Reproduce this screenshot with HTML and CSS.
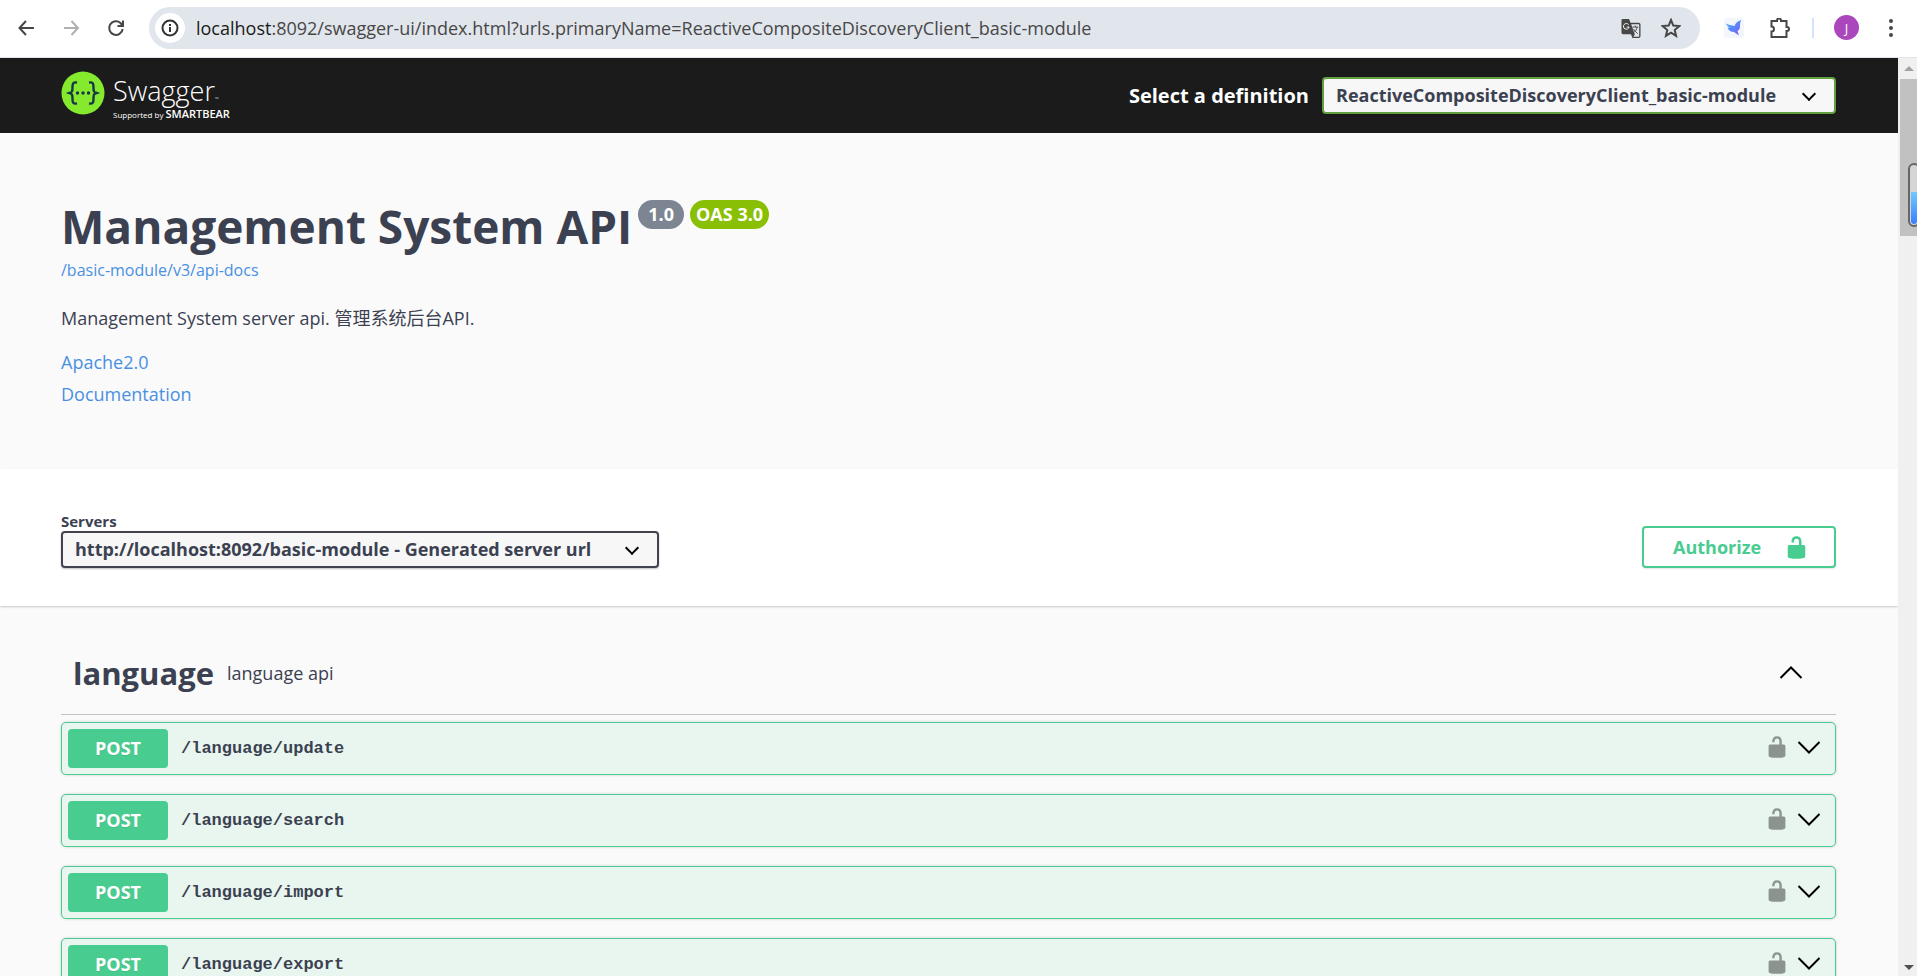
FILE: index.html
```html
<!DOCTYPE html>
<html lang="en">
<head>
<meta charset="utf-8">
<title>Swagger UI</title>
<link rel="stylesheet" href="styles.css">
</head>
<body>
<svg class="defs" aria-hidden="true">
  <symbol id="unlocked" viewBox="0 0 20 20"><path d="M15.8 8H14V5.6C14 2.703 12.665 1 10 1 7.334 1 6 2.703 6 5.6V6h2v-.801C8 3.754 8.797 3 10 3c1.203 0 2 .754 2 2.199V8H4c-.553 0-1 .646-1 1.199V17c0 .549.428 1.139.951 1.307l1.197.387C5.672 18.861 6.55 19 7.1 19h5.8c.549 0 1.428-.139 1.951-.307l1.196-.387c.524-.167.953-.757.953-1.306V9.199C17 8.646 16.352 8 15.8 8z" fill="currentColor"/></symbol>
  <symbol id="down" viewBox="0 0 24 24"><path d="M1.500 7l10.500 10.500L22.500 7" fill="none" stroke="currentColor" stroke-width="2"/></symbol>
</svg>
<header class="browser">
  <button class="tool" aria-label="Back"><svg viewBox="0 0 20 20"><path d="M18 10H4M10 3L3.500 10l6.500 7"/></svg></button>
  <button class="tool dim" aria-label="Forward"><svg viewBox="0 0 20 20"><path d="M3 10h13.500M10.500 3l6.500 7-6.500 7"/></svg></button>
  <button class="tool reload" aria-label="Reload"><svg viewBox="0 0 20 20"><path d="M16.700 11A6.800 6.800 0 1 1 14.500 5L17 8M17 2.500v5.500h-5.500"/></svg></button>
  <div class="omnibox">
    <button class="site" aria-label="Site information"><svg viewBox="0 0 20 20"><circle cx="10" cy="10" r="7.500"/><path d="M10 9v5M10 6v2"/></svg></button>
    <div class="url"><span class="host">localhost</span>:8092/swagger-ui/index.html?urls.primaryName=ReactiveCompositeDiscoveryClient_basic-module</div>
    <button class="tool" aria-label="Translate"><svg viewBox="1 0 20 21"><path class="solid" d="M2.500 1H9l1.500 4H19q2 0 2 2v12q0 2-2 2h-6.500L11 17H2.500Q1 17 1 15.500V2.500Q1 1 2.500 1z"/><path class="paper" d="M11.200 6.500H19q.600 0 .600.600v12q0 .600-.600.600h-5.500l1.500-2.500z"/><path class="thin" d="M12.500 9.500h6M15.500 8v1.500M17.500 9.500c-.500 3-2 4.500-4 6M13.500 11.500c1 2 3 3 4.500 5"/><path class="glyph" d="M8.500 7A3 3 0 1 0 9 9.500H6.500"/></svg></button>
    <button class="tool" aria-label="Bookmark"><svg viewBox="0 0 20 20"><path d="M10 2l2.300 5.600 6 .500-4.600 3.900 1.400 5.900L10 14.700l-5.100 3.200 1.400-5.900-4.600-3.900 6-.500z"/></svg></button>
  </div>
  <button class="tool bird" aria-label="Bird extension"><svg viewBox="0 0 20 20"><defs><linearGradient id="wing" x1="0" y1="0" x2="1" y2="1"><stop offset="0" stop-color="#3fb0ff"/><stop offset="1" stop-color="#7a5cf0"/></linearGradient></defs><path fill="url(#wing)" d="M2 5.500c3 1.500 6 2 8.500 2.500 1-3 3-5 7-6-1.500 2-1.500 4-1.500 6.500 0 2-1 3.500-2.500 4.500l1.500 4.500-5-3.500c-3 0-5.500-1.500-6.500-4.500l3 .300C4.500 9 3 8 2 5.500z"/></svg></button>
  <button class="tool extensions" aria-label="Extensions"><svg viewBox="2 1 19 20"><path d="M3 4h5.500v-.500a2 2 0 0 1 4 0V4H18v6h.500a2 2 0 0 1 0 4H18v6H3v-5.500a2.500 2.500 0 0 0 0-5z"/></svg></button>
  <span class="divider"></span>
  <button class="avatar" aria-label="Profile">J</button>
  <button class="tool menu" aria-label="Menu"><svg viewBox="0 0 20 20"><circle cx="10" cy="3" r="2"/><circle cx="10" cy="10" r="2"/><circle cx="10" cy="17" r="2"/></svg></button>
</header>
<div class="viewport">
  <main class="page">
    <div class="topbar">
      <div class="wrap topbar-row">
        <a class="logo" href="#">
          <svg class="mark" viewBox="0 0 44 44"><circle cx="22" cy="22" r="21.500" fill="#85ea2d"/><g fill="none" stroke="#173647" stroke-width="2.400"><path d="M16 11.500c-4-.500-4.500 1-4.500 4.500 0 4 0 5-3 6 3 1 3 2 3 6 0 3.500.500 5 4.500 4.500M28 11.500c4-.500 4.500 1 4.500 4.500 0 4 0 5 3 6-3 1-3 2-3 6 0 3.500-.500 5-4.500 4.500"/></g><g fill="#173647"><circle cx="16.500" cy="22" r="1.700"/><circle cx="22" cy="22" r="1.700"/><circle cx="27.500" cy="22" r="1.700"/></g></svg>
          <span class="brand"><span class="name">Swagger<span class="tm">™</span></span><span class="by">Supported by <b>SMARTBEAR</b></span></span>
        </a>
        <label class="definition" for="definition">Select a definition</label>
        <span class="picker definition-picker"><select id="definition"><option>ReactiveCompositeDiscoveryClient_basic-module</option></select></span>
      </div>
    </div>
    <section class="info">
      <div class="wrap">
        <div class="title-row"><h1>Management System API</h1><span class="badge">1.0</span><span class="badge oas">OAS 3.0</span></div>
        <a class="docs" href="#">/basic-module/v3/api-docs</a>
        <p class="about">Management System server api. 管理系统后台API.</p>
        <a class="more" href="#">Apache2.0</a>
        <a class="more" href="#">Documentation</a>
      </div>
    </section>
    <section class="schemes">
      <div class="wrap schemes-row">
        <div class="servers"><label for="servers">Servers</label><span class="picker"><select id="servers"><option>http://localhost:8092/basic-module - Generated server url</option></select></span></div>
        <button class="authorize"><span>Authorize</span><svg><use href="#unlocked"/></svg></button>
      </div>
    </section>
    <section class="wrap tag">
      <div class="tag-head"><h2>language</h2><p>language api</p><button class="plain" aria-label="Collapse operation"><svg viewBox="0 0 24 24"><path d="M1.500 17L12 6.500 22.500 17" fill="none" stroke="currentColor" stroke-width="2"/></svg></button></div>
      <div class="ops">
        <div class="op"><span class="method">POST</span><span class="path">/language/update</span><button class="plain lock" aria-label="Authorization"><svg><use href="#unlocked"/></svg></button><button class="plain" aria-label="Expand"><svg><use href="#down"/></svg></button></div>
        <div class="op"><span class="method">POST</span><span class="path">/language/search</span><button class="plain lock" aria-label="Authorization"><svg><use href="#unlocked"/></svg></button><button class="plain" aria-label="Expand"><svg><use href="#down"/></svg></button></div>
        <div class="op"><span class="method">POST</span><span class="path">/language/import</span><button class="plain lock" aria-label="Authorization"><svg><use href="#unlocked"/></svg></button><button class="plain" aria-label="Expand"><svg><use href="#down"/></svg></button></div>
        <div class="op"><span class="method">POST</span><span class="path">/language/export</span><button class="plain lock" aria-label="Authorization"><svg><use href="#unlocked"/></svg></button><button class="plain" aria-label="Expand"><svg><use href="#down"/></svg></button></div>
      </div>
    </section>
  </main>
  <div class="scrollbar"><span class="arrow up"></span><span class="thumb"></span><span class="arrow down"></span><span class="gauge"></span></div>
</div>
</body>
</html>
```
FILE: styles.css
```css
* { box-sizing: border-box; }
html, body { height: 100%; }
body { margin: 0; display: flex; flex-direction: column; overflow: hidden; background: #fafafa; color: #3b4151; font-family: "Open Sans", "Noto Sans CJK SC", sans-serif; }
button { margin: 0; padding: 0; border: 0; background: none; color: inherit; font-family: inherit; }
svg { display: block; }
a { color: #4990e2; text-decoration: none; }
.defs { display: none; }

.browser { flex: none; display: flex; align-items: center; height: 58px; padding: 0 16px 2px; background: #fff; color: #474747; border-bottom: 1px solid #dfe3ea; }
.tool { flex: none; width: 20px; height: 20px; margin-right: 25px; }
.tool svg { width: 20px; height: 20px; fill: none; stroke: currentColor; stroke-width: 2; }
.tool.reload { margin-right: 23px; }
.dim { color: #b0b0b0; }
.omnibox { flex: 1; min-width: 0; display: flex; align-items: center; height: 42px; padding: 0 19px 0 6px; border-radius: 21px; background: #e1e5ec; }
.omnibox .tool { margin: 0 0 0 20px; }
.site { flex: none; display: grid; place-items: center; width: 30px; height: 30px; border-radius: 50%; background: #fff; }
.site svg { width: 20px; height: 20px; fill: none; stroke: #333; stroke-width: 2; }
.url { flex: 1; min-width: 0; padding-left: 11px; overflow: hidden; white-space: nowrap; font-size: 18px; line-height: 28px; }
.host { color: #1a1a1a; }
.tool .solid { fill: #474747; stroke: none; }
.tool .paper { fill: #e1e5ec; stroke: none; }
.tool .thin { stroke-width: 1; }
.tool .glyph { stroke: #fff; stroke-width: 1; }
.tool.bird { margin: 0 26px 0 24px; background: #f3f6fd; border-radius: 3px; }
.tool.bird svg { stroke: none; }
.tool.extensions { margin-right: 22px; }
.divider { width: 2px; height: 20px; margin-right: 20px; background: #d3e3fd; }
.avatar { width: 25px; height: 25px; margin-right: 22px; border-radius: 50%; background: #ab47bc; color: #fff; font-size: 13px; }
.tool.menu { margin: 0; }
.tool.menu svg { fill: #474747; stroke: none; }

.viewport { flex: 1; min-height: 0; display: flex; }
.page { flex: 1; min-width: 0; overflow: hidden; }
.wrap { padding-left: 61px; padding-right: 62px; }
.topbar { background: #1b1b1b; }
.topbar-row { display: flex; align-items: center; height: 75px; }
.logo { display: flex; margin-right: auto; gap: 8px; color: #fff; }
.mark { width: 44px; height: 44px; }
.brand { display: flex; flex-direction: column; padding-top: 3px; }
.name { font-size: 27px; line-height: 34px; font-weight: 300; }
.tm { font-size: 5px; line-height: 1; }
.by { font-size: 8px; line-height: 12px; }
.by b { font-size: 11px; font-weight: 600; line-height: 1; }
.definition { margin-right: 13px; color: #fff; font-size: 20px; font-weight: 700; }
.picker { position: relative; display: block; }
.picker::after { content: ""; position: absolute; right: 22px; top: 12px; width: 8px; height: 8px; border: solid #000; border-width: 0 2px 2px 0; transform: rotate(45deg); pointer-events: none; }
select { appearance: none; width: 100%; height: 37px; padding: 0 40px 2px 12px; border: 2px solid #41444e; border-radius: 4px; background: #f7f7f7; color: #3b4151; font: 700 18px "Open Sans", sans-serif; box-shadow: 0 1px 2px rgba(0,0,0,.25); }
.definition-picker { width: 514px; }
.definition-picker select { border-color: #62a03f; }

.info { height: 336px; padding-top: 61px; }
.title-row { display: flex; align-items: flex-start; gap: 6px; }
h1 { margin: 0; font-size: 46px; line-height: 64px; }
.badge { height: 29px; margin-top: 6px; padding: 0 10px; border-radius: 15px; background: #7d8492; color: #fff; font-size: 18px; line-height: 29px; font-weight: 700; }
.oas { padding: 0 6px; background: #89bf04; }
.docs { display: block; font-size: 16px; line-height: 24px; }
.about { margin: 22px 0 14px; font-size: 18px; line-height: 28px; }
.more { display: block; font-size: 18px; line-height: 32px; }

.schemes { height: 137px; padding-top: 42px; background: #fff; box-shadow: 0 1px 2px rgba(0,0,0,.2); }
.schemes-row { display: flex; justify-content: space-between; align-items: flex-end; }
.servers { width: 598px; }
.servers label { display: block; font-size: 15px; line-height: 20px; font-weight: 700; }
.authorize { display: flex; align-items: center; justify-content: space-between; width: 194px; height: 42px; padding: 0 25px 0 29px; border: 2px solid #49cc90; border-radius: 4px; background: #fff; color: #49cc90; font-size: 18px; font-weight: 700; box-shadow: 0 1px 2px rgba(0,0,0,.1); }
.authorize svg { width: 25px; height: 25px; }

.tag { padding-top: 26px; }
.tag-head { display: flex; align-items: center; height: 83px; padding: 0 33px 0 12px; border-bottom: 1px solid #bfc2c7; }
h2 { margin: 0; font-size: 31px; line-height: 40px; }
.tag-head p { flex: 1; margin: 0 0 0 13px; font-size: 18px; line-height: 28px; }
.plain { flex: none; color: #000; }
.plain svg { width: 24px; height: 24px; }
.ops { display: grid; gap: 19px; padding-top: 7px; }
.op { display: flex; align-items: center; height: 53px; padding: 0 14px 0 6px; border: 1px solid #49cc90; border-radius: 5px; background: #e8f6ef; box-shadow: 0 0 3px rgba(0,0,0,.19); }
.op .plain { padding-bottom: 4px; }
.method { width: 100px; border-radius: 4px; background: #49cc90; color: #fff; font-size: 18px; line-height: 39px; font-weight: 700; text-align: center; text-shadow: 0 1px 0 rgba(0,0,0,.1); }
.path { flex: 1; padding-left: 13px; font: 700 17px/24px "Liberation Mono", monospace; }
.op .lock { margin-right: 8px; color: #8b948f; }

.scrollbar { position: relative; flex: none; display: flex; flex-direction: column; width: 19px; padding: 0 0 0 2px; overflow: hidden; background: #f0f0f0; }
.arrow { height: 21px; display: grid; place-items: center; }
.arrow::before { content: ""; border: solid transparent; border-width: 0 5px 5px; border-bottom-color: #a3a3a3; }
.arrow.down { height: 17px; margin-top: auto; }
.arrow.down::before { border-width: 5px 5px 0; border-top-color: #505050; }
.thumb { height: 157px; background: #c1c1c1; }
.gauge { position: absolute; right: -3px; top: 105px; width: 12px; height: 64px; padding: 1px; border: 2px solid #666; border-radius: 6px; background: linear-gradient(#d5d5d5 45%, #72c8ff 45%, #3a80ff) content-box, #d5d5d5; }
```
